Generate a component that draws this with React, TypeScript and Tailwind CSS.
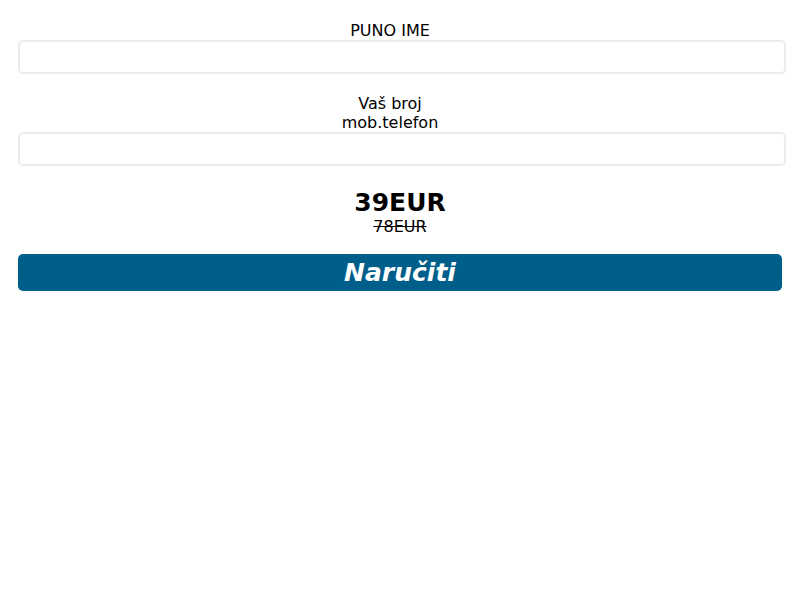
export default function App() {
  return (
    <div
      className="w-[800px] min-h-[600px] bg-white text-black px-[18px] pt-[21px]"
      style={{ fontFamily: '"DejaVu Sans", sans-serif' }}
    >
      <div className="pr-[20px] text-center text-[16px] leading-[19px]">PUNO IME</div>
      <input
        type="text"
        className="block w-[768px] h-[34px] border-2 border-[#ececec] rounded-[5px] bg-white outline-none"
      />
      <div className="mt-[20px] pr-[20px] text-center text-[16px] leading-[19px]">
        Vaš broj
        <br />
        mob.telefon
      </div>
      <input
        type="tel"
        className="block w-[768px] h-[34px] border-2 border-[#ececec] rounded-[5px] bg-white outline-none"
      />
      <div className="mt-[23px] text-center text-[25px] leading-[28px] font-bold">39EUR</div>
      <div className="text-center text-[16px] leading-[19px] line-through">78EUR</div>
      <button
        type="button"
        className="mt-[18px] block w-[764px] h-[37px] rounded-[5px] bg-[#005f8a] text-white text-[25px] font-bold italic leading-[37px] text-center"
      >
        Naručiti
      </button>
    </div>
  );
}
